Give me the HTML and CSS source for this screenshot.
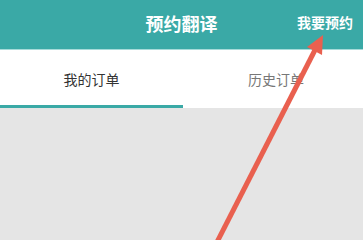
FILE: index.html
```html
<!DOCTYPE html>
<html lang="zh">
<head>
<meta charset="utf-8">
<link rel="stylesheet" href="styles.css">
</head>
<body>
<div class="app">
  <header class="header">
    <div class="title">预约翻译</div>
    <div class="action">我要预约</div>
  </header>
  <nav class="tabs">
    <div class="tab active">我的订单</div>
    <div class="tab history">历史订单</div>
  </nav>
  <main class="content"></main>
  <svg class="arrow" width="363" height="240" viewBox="0 0 363 240">
    <line x1="215" y1="246" x2="315" y2="50" stroke="#e9604f" stroke-width="5" />
    <polygon points="323,35 322,55 307,47" fill="#e9604f" />
  </svg>
</div>
</body>
</html>
```
FILE: styles.css
```css
* { box-sizing: border-box; }
html, body { margin: 0; padding: 0; }
body {
  font-family: "Noto Sans CJK SC", "Noto Sans", sans-serif;
  width: 363px;
  height: 240px;
  overflow: hidden;
}
.app {
  position: relative;
  width: 363px;
  height: 240px;
  display: flex;
  flex-direction: column;
  background: #e5e5e5;
}
.header {
  height: 50px;
  background: #3aa9a6;
  border-bottom: 1px solid #a6dbd9;
  display: flex;
  align-items: center;
  justify-content: center;
  position: relative;
  color: #fff;
}
.title {
  font-size: 18px;
  font-weight: bold;
  margin-top: -3px;
}
.action {
  position: absolute;
  right: 10px;
  top: 12px;
  font-size: 14px;
  font-weight: bold;
}
.tabs {
  height: 58px;
  background: #fff;
  display: grid;
  grid-template-columns: 183px 1fr;
}
.tab {
  display: flex;
  align-items: center;
  justify-content: center;
  font-size: 14px;
  color: #777;
  border-bottom: 3px solid transparent;
  padding-top: 2px;
}
.tab.history {
  padding-left: 6px;
}
.tab.active {
  color: #333;
  border-bottom-color: #3aa9a6;
}
.content {
  flex: 1;
  background: #e5e5e5;
}
.arrow {
  position: absolute;
  left: 0;
  top: 0;
}
```
